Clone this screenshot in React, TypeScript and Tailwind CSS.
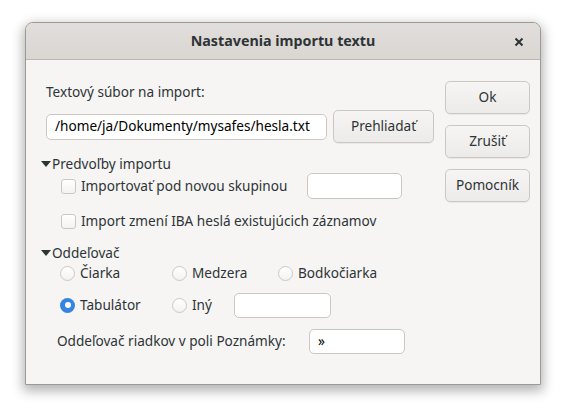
import type { ReactNode } from 'react';

const font = { fontFamily: '"Noto Sans", "DejaVu Sans", sans-serif' };

function Button({ children, className = '' }: { children: ReactNode; className?: string }) {
  return (
    <div
      className={`flex items-center justify-center rounded-[5px] border border-[#cdc7c2] bg-gradient-to-b from-[#f6f5f4] to-[#edebe9] text-[#2e3436] shadow-[0_1px_0_rgba(0,0,0,0.05)] ${className}`}
    >
      {children}
    </div>
  );
}

function Entry({ value = '', className = '' }: { value?: string; className?: string }) {
  return (
    <div
      className={`flex items-center rounded-[5px] border border-[#cdc7c2] bg-white px-[8px] text-[#000] ${className}`}
    >
      {value}
    </div>
  );
}

function Check() {
  return (
    <span className="mr-[5px] inline-block h-[15px] w-[15px] shrink-0 rounded-[3px] border border-[#cdc7c2] bg-gradient-to-b from-[#ffffff] to-[#f4f2f1]" />
  );
}

function Radio({ checked = false }: { checked?: boolean }) {
  if (checked) {
    return (
      <span className="mr-[5px] flex h-[15px] w-[15px] shrink-0 items-center justify-center rounded-full bg-[#3584e4]">
        <span className="h-[6px] w-[6px] rounded-full bg-white" />
      </span>
    );
  }
  return (
    <span className="mr-[5px] inline-block h-[15px] w-[15px] shrink-0 rounded-full border border-[#cdc7c2] bg-gradient-to-b from-[#ffffff] to-[#f4f2f1]" />
  );
}

function Expander({ label }: { label: string }) {
  return (
    <div className="flex h-[18px] items-center">
      <svg width={12} height={10} viewBox="0 0 12 10">
        <path d="M1 2 L11 2 L6 8 Z" fill="#2e3436" />
      </svg>
      <span>{label}</span>
    </div>
  );
}

export default function App() {
  return (
    <div className="h-[414px] w-[566px] bg-white pl-[25px] pt-[22px]" style={font}>
      <div className="flex h-[363px] w-[516px] flex-col overflow-hidden rounded-t-[8px] border border-[#9d9a96] bg-[#f6f5f4] text-[13.6px] text-[#2e3436] shadow-[0_4px_12px_2px_rgba(0,0,0,0.3)]">
        {/* Title bar */}
        <div className="relative flex h-[37px] shrink-0 items-center justify-center border-b border-[#bfb8b1] bg-gradient-to-b from-[#e1dedb] to-[#dad6d2]">
          <span className="text-[14.3px] font-bold text-[#2e3436]">Nastavenia importu textu</span>
          <svg width={10} height={10} viewBox="0 0 10 10" className="absolute right-[16px] top-[14px]">
            <path d="M1.5 1.5 L8.5 8.5 M8.5 1.5 L1.5 8.5" stroke="#2e3436" strokeWidth={2} />
          </svg>
        </div>

        {/* Body */}
        <div className="flex flex-1 pl-[14px] pr-[10px]">
          <div className="flex w-[395px] flex-col">
            <div className="ml-[6px] mt-[22px] flex h-[20px] items-center">Textový súbor na import:</div>

            <div className="ml-[6px] mt-[8px] flex h-[33px] items-center">
              <Entry value="/home/ja/Dokumenty/mysafes/hesla.txt" className="h-[26px] w-[281px]" />
              <Button className="ml-[6px] h-[33px] w-[101px]">Prehliadať</Button>
            </div>

            <div className="mt-[12px]">
              <Expander label="Predvoľby importu" />
            </div>

            <div className="ml-[21px] flex h-[26px] items-center">
              <Check />
              <span className="w-[226px]">Importovať pod novou skupinou</span>
              <Entry className="h-[26px] w-[95px]" />
            </div>

            <div className="ml-[21px] mt-[12px] flex h-[20px] items-center">
              <Check />
              <span>Import zmení IBA heslá existujúcich záznamov</span>
            </div>

            <div className="mt-[13px]">
              <Expander label="Oddeľovač" />
            </div>

            <div className="ml-[20px] mt-[1px] grid h-[20px] grid-cols-[112px_106px_auto] items-center">
              <div className="flex items-center">
                <Radio />
                <span>Čiarka</span>
              </div>
              <div className="flex items-center">
                <Radio />
                <span>Medzera</span>
              </div>
              <div className="flex items-center">
                <Radio />
                <span>Bodkočiarka</span>
              </div>
            </div>

            <div className="ml-[20px] mt-[10px] grid h-[25px] grid-cols-[112px_62px_auto] items-center">
              <div className="flex items-center">
                <Radio checked />
                <span>Tabulátor</span>
              </div>
              <div className="flex items-center">
                <Radio />
                <span>Iný</span>
              </div>
              <Entry className="h-[25px] w-[97px]" />
            </div>

            <div className="ml-[17px] mt-[11px] flex h-[25px] items-center">
              <span className="w-[252px]">Oddeľovač riadkov v poli Poznámky:</span>
              <Entry value="»" className="h-[25px] w-[96px]" />
            </div>
          </div>

          <div className="ml-auto mt-[21px] flex w-[85px] flex-col gap-[11px]">
            <Button className="h-[33px]">Ok</Button>
            <Button className="h-[33px]">Zrušiť</Button>
            <Button className="h-[33px]">Pomocník</Button>
          </div>
        </div>
      </div>
    </div>
  );
}
